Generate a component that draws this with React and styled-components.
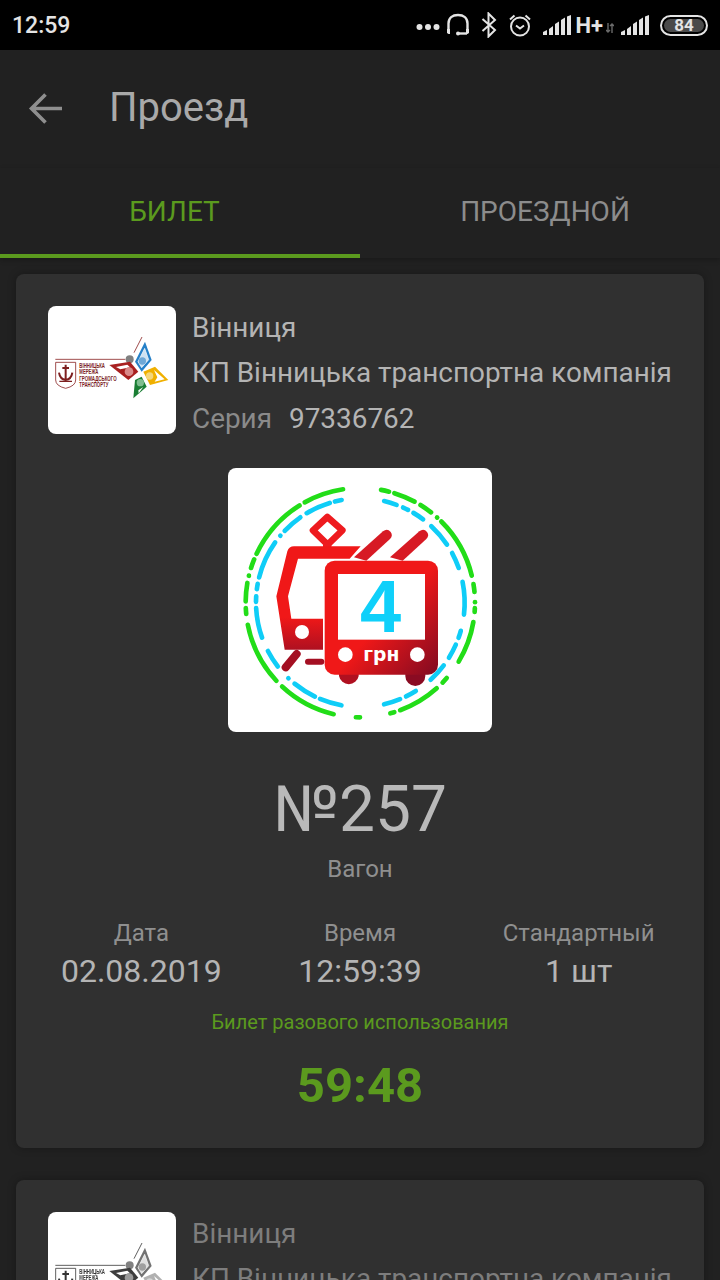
import React from "react";
import styled, { createGlobalStyle } from "styled-components";

const GlobalStyle = createGlobalStyle`
    html, body { margin: 0; padding: 0; background: #212121; }
    * { box-sizing: border-box; }
`;

const GREEN_ARCS = [
    [-8.7, -29.5], [-32.6, -65.9], [-69, -73.6], [-77.6, -77.7], [-81.4, -90.7], [-94, -97],
    [-102.5, -134], [-138, -167], [-180, -178], [165, 163], [160, 139], [135, 132],
    [122, 101], [96, 94], [91, 91.1], [86, 82], [77.7, 46], [43, 43.1], [39, 32.5], [29, 17.8], [15, 10.8]
];

const BLUE_ARCS = [
    [-10.4, -14.3], [-17.3, -31.5], [-35.8, -47.4], [-51, -51.1], [-55.8, -77.4], [-81, -84],
    [-88, -91], [-94.4, -111], [-119, -129], [-137.5, -137.6], [-142, -155], [-158, -170],
    [167, 158], [154.5, 148.5], [138.5, 128], [123, 115], [111, 107], [98, 80], [72, 63],
    [57.5, 44], [38, 31.5], [28, 25], [21, 13.7]
];

const RING_X = 397;
const RING_Y = 404;

// угол считается от верха по часовой стрелке, замерен от точки (396, 396)
const arc = (r, a, b) => {
    const pt = (deg) => {
        const t = (deg * Math.PI) / 180;
        const rx = 396 + r * Math.sin(t) - RING_X;
        const ry = RING_Y - (396 - r * Math.cos(t));
        const n = Math.atan2(rx, ry);
        return `${(RING_X + r * Math.sin(n)).toFixed(1)} ${(RING_Y - r * Math.cos(n)).toFixed(1)}`;
    };
    return `M${pt(a)} A${r} ${r} 0 0 ${b > a ? 1 : 0} ${pt(b)}`;
};

const Page = styled.div`
    width: 720px;
    height: 1280px;
    overflow: hidden;
    background: #212121;
    font-family: Roboto, "Noto Sans", sans-serif;
`;

const StatusBar = styled.div`
    height: 50px;
    background: #000;
    display: flex;
    align-items: center;
    justify-content: space-between;
    padding: 0 12px;
    color: #e4e4e4;
`;

const Clock = styled.div`
    font-size: 23px;
    font-weight: 500;
`;

const StatusIcons = styled.div`
    display: flex;
    align-items: center;
    gap: 11px;
`;

const NetworkLabel = styled.span`
    font-size: 22px;
    font-weight: 700;
    margin: 0 -8px 0 -7px;
`;

const TransferSlot = styled.span`
    display: flex;
    margin: 6px -4px 0 0;
`;

const DotsSlot = styled.span`
    display: flex;
    margin: 4px -5px 0 0;
`;

const Battery = styled.div`
    width: 48px;
    height: 21px;
    border: 2px solid #e4e4e4;
    border-radius: 11px;
    padding: 2px;
    display: flex;
`;

const BatteryLevel = styled.div`
    flex: 1;
    background: #4a4a4a;
    border-radius: 7px;
    color: #e4e4e4;
    font-size: 17px;
    font-weight: 700;
    line-height: 13px;
    text-align: center;
`;

const Toolbar = styled.div`
    height: 118px;
    display: flex;
    align-items: center;
    padding: 0 0 3px 28px;
    gap: 45px;
`;

const Title = styled.div`
    font-size: 40px;
    color: #a9a9a9;
`;

const Tabs = styled.div`
    height: 90px;
    display: flex;
    box-shadow: 0 2px 5px rgba(0, 0, 0, 0.25);
    position: relative;
`;

const Tab = styled.div`
    width: 50%;
    display: flex;
    align-items: center;
    justify-content: center;
    padding: ${(p) => (p.$active ? "0 11px 0 0" : "0 0 0 10px")};
    font-size: 28px;
    color: ${(p) => (p.$active ? "#5b9a1e" : "#8c8c8c")};
    border-bottom: 4px solid ${(p) => (p.$active ? "#5b9a1e" : "transparent")};
`;

const List = styled.div`
    padding: 16px;
    display: flex;
    flex-direction: column;
    gap: 32px;
`;

const Card = styled.div`
    background: #303030;
    border-radius: 8px;
    padding: 32px;
    display: flex;
    flex-direction: column;
    align-items: stretch;
    box-shadow: 0 0 8px rgba(0, 0, 0, 0.3);
`;

const CardHeader = styled.div`
    height: 128px;
    display: flex;
    align-items: center;
    gap: 16px;
`;

const LogoBox = styled.div`
    width: 128px;
    height: 128px;
    flex: none;
    background: #fff;
    border-radius: 8px;
    overflow: hidden;
    filter: ${(p) => (p.$muted ? "grayscale(1)" : "none")};

    svg { display: block; }
`;

const HeaderText = styled.div`
    padding-top: 6px;
    font-size: 27.9px;
    line-height: 45.5px;
    color: ${(p) => (p.$muted ? "#7d7d7d" : "#b4b4b4")};
    white-space: nowrap;
`;

const SeriesLabel = styled.span`
    color: #8a8a8a;
    margin-right: 17px;
`;

const TicketImage = styled.div`
    width: 264px;
    height: 264px;
    margin: 34px auto 0;
    background: #fff;
    border-radius: 8px;
    overflow: hidden;

    svg { display: block; }
`;

const VehicleNumber = styled.div`
    margin-top: 40px;
    font-size: 64px;
    line-height: 76px;
    text-align: center;
    color: #b9b9b9;
`;

const VehicleType = styled.div`
    margin-top: 6px;
    font-size: 24px;
    line-height: 30px;
    text-align: center;
    color: #8f8f8f;
`;

const Stats = styled.div`
    margin: 32px -16px 0;
    display: grid;
    grid-template-columns: repeat(3, 1fr);
`;

const Stat = styled.div`
    text-align: center;
`;

const StatLabel = styled.div`
    font-size: 24px;
    line-height: 34px;
    color: #8f8f8f;
`;

const StatValue = styled.div`
    font-size: 32px;
    line-height: 42px;
    color: #b4b4b4;
`;

const Caption = styled.div`
    margin-top: 16px;
    font-size: 20px;
    line-height: 28px;
    text-align: center;
    color: #5b9a1e;
`;

const Timer = styled.div`
    margin-top: 20px;
    font-size: 49px;
    line-height: 60px;
    font-weight: 700;
    text-align: center;
    color: #5b9a1e;
`;

const BackArrow = () => (
    <svg width="36" height="36" viewBox="0 0 36 36" fill="none" stroke="#8f8f8f" strokeWidth="3.6">
        <path d="M34 18.5H4M17.5 4.5 3.5 18.5l14 14" />
    </svg>
);

const Dots = () => (
    <svg width="24" height="8" viewBox="0 0 24 8" fill="#e4e4e4">
        <circle cx="3.500" cy="4" r="3" /><circle cx="12" cy="4" r="3" /><circle cx="20.500" cy="4" r="3" />
    </svg>
);

const Headset = () => (
    <svg width="24" height="24" viewBox="0 0 24 24" fill="none" stroke="#e4e4e4" strokeWidth="2.4">
        <path d="M2.500 17V10.500C2.500 5 6.500 2 12 2s9.500 3 9.500 8.500V17" />
        <path d="M1 16h3v5H2.500L1 20zM23 16h-3v5h1.500l1.500-1z" fill="#e4e4e4" stroke="none" />
        <path d="M11 20.500h10" />
        <circle cx="12" cy="20.500" r="2" fill="#e4e4e4" stroke="none" />
    </svg>
);

const Bluetooth = () => (
    <svg width="16" height="26" viewBox="0 0 16 26" fill="none" stroke="#e4e4e4" strokeWidth="2">
        <path d="M1.500 7 14 18l-6.500 6.500V1.500L14 8 1.500 19" />
    </svg>
);

const Alarm = () => (
    <svg width="24" height="24" viewBox="0 0 24 24" fill="none" stroke="#e4e4e4" strokeWidth="2">
        <circle cx="12" cy="13.500" r="9" />
        <path d="M8 12.500l4 3 4-3M2 6.500 6.500 2.500M22 6.500 17.500 2.500" />
    </svg>
);

const Signal = () => (
    <svg width="28" height="20" viewBox="0 0 28 20" fill="#e4e4e4">
        <path d="M0 17l4-2v5H0zM6 14l4-3v9H6zM12 9l4-2.500V20h-4zM18 5l4-2.500V20h-4zM24 1.500 28 0v20h-4z" />
    </svg>
);

const TransferArrows = () => (
    <svg width="8" height="10" viewBox="0 0 8 10" fill="none" stroke="#6a6a6a" strokeWidth="1.400">
        <path d="M2 0v9M0 7l2 2 2-2M6 10V1M4 3l2-2 2 2" />
    </svg>
);

const CityLogo = () => (
    <svg width="128" height="128" viewBox="0 0 384 384">
        <path d="M22 160H232" stroke="#8d2a2a" strokeWidth="2.500" />
        <path d="M23 169H83V222Q83 240 53 247 23 240 23 222Z" fill="none" stroke="#8d2a2a" strokeWidth="2.500" />
        <path d="M53 176V222M43 186H63M33 200Q36 220 53 222 70 220 73 200" fill="none" stroke="#7d1f1f" strokeWidth="6" />
        <path d="M34 226 72 226" stroke="#7d1f1f" strokeWidth="4" />
        <g fill="#7d1f1f" fontFamily="'Liberation Sans', sans-serif" fontWeight="700" fontSize="20">
            <text x="94" y="185" textLength="77" lengthAdjust="spacingAndGlyphs">ВІННИЦЬКА</text>
            <text x="94" y="204" textLength="57" lengthAdjust="spacingAndGlyphs">МЕРЕЖА</text>
            <text x="94" y="224" textLength="112" lengthAdjust="spacingAndGlyphs">ГРОМАДСЬКОГО</text>
            <text x="94" y="244" textLength="87" lengthAdjust="spacingAndGlyphs">ТРАНСПОРТУ</text>
        </g>
        <path d="M282 93 258 140" stroke="#8d2a2a" strokeWidth="2.500" />
        <circle cx="245" cy="160" r="12" fill="#808080" />
        <path d="M291 107 311 162 281 197 261 167Z" fill="#2580c8" />
        <path d="M290 127 302 161 281 185 270 167Z" fill="#cfe2f2" stroke="#fff" strokeWidth="2" />
        <circle cx="283" cy="165" r="11" fill="#6fa8d6" />
        <path d="M184 177 246 167 271 197 241 222Z" fill="#a82020" />
        <path d="M204 183 238 176 246 184 217 190Z" fill="#fff" />
        <circle cx="243" cy="197" r="13" fill="#d98a8a" />
        <path d="M286 197 321 182 361 222 306 237Z" fill="#f0b000" />
        <path d="M318 192 350 220 320 227 328 214Z" fill="#fff" />
        <circle cx="305" cy="210" r="11" fill="#f4d67a" />
        <path d="M261 222 281 212 296 242 256 277Z" fill="#1a7e34" />
        <path d="M271 253 286 243 272 262Z" fill="#fff" />
        <circle cx="277" cy="230" r="11" fill="#7fbd8f" />
    </svg>
);

const TicketPicture = () => (
    <svg width="264" height="264" viewBox="0 0 792 792">
        <defs>
            <linearGradient id="busRed" gradientUnits="userSpaceOnUse" x1="300" y1="350" x2="620" y2="640">
                <stop offset="0.45" stopColor="#f01818" />
                <stop offset="1" stopColor="#7d0a22" />
            </linearGradient>
            <linearGradient id="tailRed" gradientUnits="userSpaceOnUse" x1="200" y1="400" x2="200" y2="560">
                <stop offset="0.3" stopColor="#f01818" />
                <stop offset="1" stopColor="#a50f22" />
            </linearGradient>
        </defs>
        <g fill="none" strokeLinecap="round" strokeWidth="14">
            {GREEN_ARCS.map(([a, b]) => <path key={a} d={arc(344, a, b)} stroke="#22dd18" />)}
            {BLUE_ARCS.map(([a, b]) => <path key={a} d={arc(313, a, b)} stroke="#0fcdf7" />)}
        </g>
        <path d="M298 147 343 187 299 230 255 187Z" fill="#fff" stroke="#ee1b1f" strokeWidth="20" strokeLinejoin="round" />
        <path d="M285 222H310V240H285Z" fill="#ee1b1f" />
        <path d="M198 235H398L365 272H210L180 385 190 452H285V545H170L145 385 178 250Q183 235 198 235Z" fill="url(#tailRed)" />
        <path d="M378 268 465 190Q478 180 488 192 496 203 486 213L415 278Z" fill="#d71a24" />
        <path d="M486 268 574 190Q587 180 597 192 605 203 595 213L524 278Z" fill="#d71a24" />
        <path d="M173 598 206 558" stroke="#a40f22" strokeWidth="24" strokeLinecap="round" />
        <path d="M240 581H280" stroke="#a40f22" strokeWidth="18" strokeLinecap="round" />
        <circle cx="222" cy="492" r="21" fill="#fff" />
        <path d="M333 610H392V624A30 30 0 0 1 333 624Z" fill="#b01020" />
        <path d="M532 610H592V624A30 30 0 0 1 532 624Z" fill="#8a0b22" />
        <rect x="290" y="278" width="340" height="342" rx="30" fill="url(#busRed)" />
        <rect x="330" y="318" width="261" height="197" fill="#fff" />
        <circle cx="352" cy="560" r="22" fill="#fff" />
        <circle cx="568" cy="560" r="22" fill="#fff" />
        <text x="460" y="578" textAnchor="middle" fill="#fff" fontFamily="'DejaVu Sans', sans-serif" fontWeight="700" fontSize="56">грн</text>
        <text x="458" y="493" textAnchor="middle" fill="#0fd0fa" fontFamily="'Liberation Sans', sans-serif" fontWeight="700" fontSize="222">4</text>
    </svg>
);

const CardTop = ({ muted }) => (
    <CardHeader>
        <LogoBox $muted={muted}><CityLogo /></LogoBox>
        <HeaderText $muted={muted}>
            <div>Вінниця</div>
            <div>КП Вінницька транспортна компанія</div>
            <div><SeriesLabel>Серия</SeriesLabel>97336762</div>
        </HeaderText>
    </CardHeader>
);

export default function App() {
    return (
        <Page>
            <GlobalStyle />
            <StatusBar>
                <Clock>12:59</Clock>
                <StatusIcons>
                    <DotsSlot><Dots /></DotsSlot>
                    <Headset />
                    <Bluetooth />
                    <Alarm />
                    <Signal />
                    <NetworkLabel>H+</NetworkLabel>
                    <TransferSlot><TransferArrows /></TransferSlot>
                    <Signal />
                    <Battery><BatteryLevel>84</BatteryLevel></Battery>
                </StatusIcons>
            </StatusBar>
            <Toolbar>
                <BackArrow />
                <Title>Проезд</Title>
            </Toolbar>
            <Tabs>
                <Tab $active>БИЛЕТ</Tab>
                <Tab>ПРОЕЗДНОЙ</Tab>
            </Tabs>
            <List>
                <Card>
                    <CardTop />
                    <TicketImage><TicketPicture /></TicketImage>
                    <VehicleNumber>№257</VehicleNumber>
                    <VehicleType>Вагон</VehicleType>
                    <Stats>
                        <Stat><StatLabel>Дата</StatLabel><StatValue>02.08.2019</StatValue></Stat>
                        <Stat><StatLabel>Время</StatLabel><StatValue>12:59:39</StatValue></Stat>
                        <Stat><StatLabel>Стандартный</StatLabel><StatValue>1 шт</StatValue></Stat>
                    </Stats>
                    <Caption>Билет разового использования</Caption>
                    <Timer>59:48</Timer>
                </Card>
                <Card>
                    <CardTop muted />
                </Card>
            </List>
        </Page>
    );
}
